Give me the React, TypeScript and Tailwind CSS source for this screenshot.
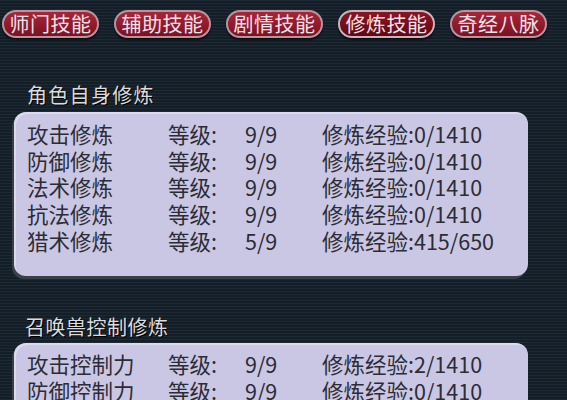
const tabs = [
  { label: '师门技能', active: false },
  { label: '辅助技能', active: false },
  { label: '剧情技能', active: false },
  { label: '修炼技能', active: true },
  { label: '奇经八脉', active: false },
];

const selfRows = [
  { name: '攻击修炼', level: '9/9', exp: '0/1410' },
  { name: '防御修炼', level: '9/9', exp: '0/1410' },
  { name: '法术修炼', level: '9/9', exp: '0/1410' },
  { name: '抗法修炼', level: '9/9', exp: '0/1410' },
  { name: '猎术修炼', level: '5/9', exp: '415/650' },
];

// only the first two rows are inside the window
const petRows = [
  { name: '攻击控制力', level: '9/9', exp: '2/1410' },
  { name: '防御控制力', level: '9/9', exp: '0/1410' },
];

type Row = { name: string; level: string; exp: string };

function TrainingPanel({ rows, className }: { rows: Row[]; className: string }) {
  return (
    <div
      className={`ml-[14px] w-[514px] shrink-0 rounded-[12px] bg-[#cac7e5] pl-[13px] text-[21.5px] leading-[26.7px] text-[#2c2c34] shadow-[inset_2px_2px_0_rgba(255,255,255,0.35),-2px_3px_0_#3a4048] ${className}`}
    >
      {rows.map((r) => (
        <div key={r.name} className="flex whitespace-nowrap">
          <span className="w-[141px]">{r.name}</span>
          <span className="w-[77px]">等级:</span>
          <span className="w-[77px]">{r.level}</span>
          <span>修炼经验:{r.exp}</span>
        </div>
      ))}
    </div>
  );
}

export default function App() {
  return (
    <div
      className="flex h-[400px] w-[567px] flex-col overflow-hidden bg-[#1a2530] bg-[repeating-linear-gradient(180deg,#1d2a35_0px,#1d2a35_1px,#141e27_1px,#141e27_3px)] font-['Noto_Sans_CJK_SC',sans-serif]"
    >
      {/* Tabs */}
      <div className="flex gap-[15px] pl-[2px] pt-[10px]">
        {tabs.map((t) => (
          <div
            key={t.label}
            className={`flex h-[28px] w-[97px] items-center justify-center rounded-full border-2 text-[20px] leading-none tracking-[0.5px] text-[#f4e2ea] shadow-[0_2px_2px_rgba(0,0,0,0.6)] ${
              t.active
                ? 'border-[#c9b4b8] bg-[linear-gradient(180deg,#8a1424,#5e0a16)]'
                : 'border-[#b8949c] bg-[linear-gradient(180deg,#a82539,#7a1223)]'
            }`}
          >
            {t.label}
          </div>
        ))}
      </div>

      {/* 角色自身修炼 */}
      <div className="ml-[27px] mt-[45px] text-[20px] leading-[24px] tracking-[1.3px] text-[#dcdcdc] [text-shadow:1px_1px_0_#000]">
        角色自身修炼
      </div>
      <TrainingPanel rows={selfRows} className="mt-[5px] h-[164px] pt-[9px]" />

      {/* 召唤兽控制修炼 */}
      <div className="ml-[25px] mt-[39px] text-[20px] leading-[24px] tracking-[0.5px] text-[#dcdcdc] [text-shadow:1px_1px_0_#000]">
        召唤兽控制修炼
      </div>
      <TrainingPanel rows={petRows} className="mt-[4px] h-[164px] pt-[8px]" />
    </div>
  );
}
